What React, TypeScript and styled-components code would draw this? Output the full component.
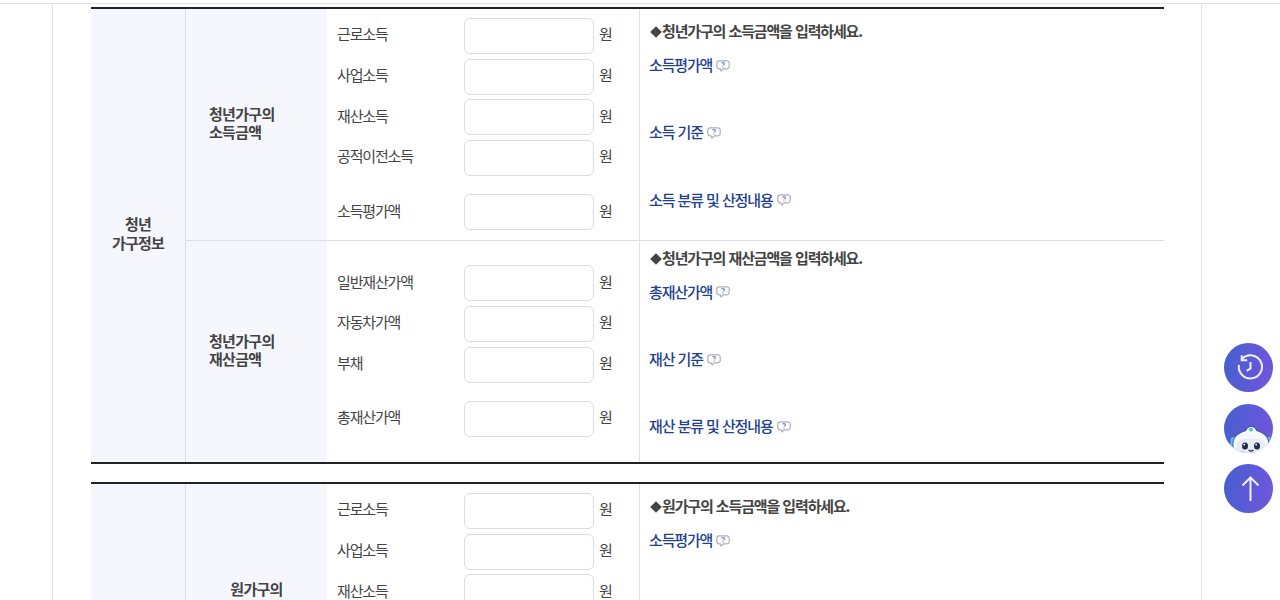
import styled, { createGlobalStyle } from 'styled-components'

const GlobalStyle = createGlobalStyle`
  * {
    box-sizing: border-box;
  }

  body {
    margin: 0;
    background: #fff;
    color: #444;
    font-family: 'Noto Sans CJK KR', 'Noto Sans', sans-serif;
    font-size: 15px;
    letter-spacing: -1.15px;
    word-spacing: 1px;
  }
`

const Page = styled.div`
  height: 600px;
  padding-top: 3px;
  overflow: hidden;
`

const Frame = styled.main`
  border-top: 1px solid #e2e2e2;
  height: 100%;
`

const Content = styled.div`
  width: 1150px;
  height: 620px;
  margin-left: 52px;
  padding: 3px 37px 0 38px;
  border: solid #e2e2e2;
  border-width: 0 1px;
`

const Table = styled.section<{ $height: number }>`
  display: grid;
  grid-template-columns: 94px 1fr;
  grid-template-rows: 100%;
  width: 1073px;
  height: ${({ $height }) => $height}px;
  margin-bottom: 18px;
  border: solid #222226;
  border-width: 2px 0;
`

const GroupHead = styled.div`
  display: flex;
  align-items: center;
  justify-content: center;
  padding-bottom: 4px;
  background: #f6f7fd;
  font-weight: 700;
  letter-spacing: -0.8px;
  line-height: 18.5px;
  text-align: center;
`

const Groups = styled.div`
  display: flex;
  flex-direction: column;
  border-left: 1px solid #dcdde3;
`

const Group = styled.div<{ $height: number }>`
  display: grid;
  grid-template-columns: 141px 312px 1fr;
  grid-template-rows: 100%;
  flex: none;
  height: ${({ $height }) => $height}px;

  & + & {
    border-top: 1px solid #dedee2;
  }
`

const GroupTitle = styled.div<{ $center?: boolean }>`
  display: flex;
  align-items: center;
  justify-content: ${({ $center }) => ($center ? 'center' : 'flex-start')};
  padding: 0 0 3px ${({ $center }) => ($center ? 0 : 23)}px;
  background: #f6f7fd;
  font-weight: 700;
  letter-spacing: -0.7px;
  line-height: 18.5px;
`

const Fields = styled.div<{ $top: number }>`
  padding: ${({ $top }) => $top}px 0 0 10px;
`

const Field = styled.label`
  display: flex;
  align-items: center;
  height: 36px;
  margin-bottom: 4.7px;

  &.total {
    margin-top: 18.4px;
  }
`

const FieldName = styled.span`
  width: 127px;
  line-height: 20px;
  padding-bottom: 3.5px;
`

const Input = styled.input`
  width: 130px;
  height: 36px;
  margin-right: 5px;
  padding: 0 10px;
  border: 1px solid #dcdcdc;
  border-radius: 6px;
  background: #fff;
  font: inherit;
`

const Unit = styled.span`
  padding-bottom: 3.5px;
  line-height: 20px;
`

const Guide = styled.div<{ $top: number }>`
  padding: ${({ $top }) => $top}px 0 0 9px;
  border-left: 1px solid #e2e2e6;
`

const GuideTitle = styled.p`
  margin: -1px 0 1px;
  padding-left: 1px;
  font-weight: 700;
  line-height: 33.6px;
`

const Diamond = styled.svg`
  width: 12px;
  height: 12px;
  vertical-align: -1px;
  fill: #444;
`

const GuideLink = styled.a`
  display: flex;
  align-items: center;
  gap: 4px;
  height: 33.6px;
  margin-bottom: 33.6px;
  color: #1f3f93;
  font-weight: 500;
  line-height: 33.6px;
  cursor: pointer;

  &:last-child {
    margin-bottom: 0;
  }

  svg {
    display: block;
    flex: none;
    margin-top: 1px;
  }
`

const QuickMenu = styled.nav`
  position: fixed;
  top: 343px;
  right: 7px;
  display: flex;
  flex-direction: column;
  gap: 11.5px;
`

const QuickButton = styled.button`
  display: block;
  width: 49px;
  height: 49px;
  padding: 0;
  overflow: hidden;
  border: 0;
  border-radius: 50%;
  background: linear-gradient(100deg, #455fcf, #7256dd);
  cursor: pointer;

  svg {
    display: block;
  }
`

interface GroupData {
  title: string[]
  center?: boolean
  height: number
  top: number
  guideTop: number
  fields: string[]
  total: string
  guide: string
  links: string[]
}

interface TableData {
  head: string[]
  height: number
  groups: GroupData[]
}

const tables: TableData[] = [
  {
    head: ['청년', '가구정보'],
    height: 457,
    groups: [
      {
        title: ['청년가구의', '소득금액'],
        height: 231,
        top: 9,
        guideTop: 5.7,
        fields: ['근로소득', '사업소득', '재산소득', '공적이전소득'],
        total: '소득평가액',
        guide: '청년가구의 소득금액을 입력하세요.',
        links: ['소득평가액', '소득 기준', '소득 분류 및 산정내용'],
      },
      {
        title: ['청년가구의', '재산금액'],
        height: 222,
        top: 24.4,
        guideTop: 0.5,
        fields: ['일반재산가액', '자동차가액', '부채'],
        total: '총재산가액',
        guide: '청년가구의 재산금액을 입력하세요.',
        links: ['총재산가액', '재산 기준', '재산 분류 및 산정내용'],
      },
    ],
  },
  {
    head: ['원가구정보'],
    height: 457,
    groups: [
      {
        title: ['원가구의', '소득금액'],
        center: true,
        height: 231,
        top: 9,
        guideTop: 5.7,
        fields: ['근로소득', '사업소득', '재산소득', '공적이전소득'],
        total: '소득평가액',
        guide: '원가구의 소득금액을 입력하세요.',
        links: ['소득평가액', '소득 기준', '소득 분류 및 산정내용'],
      },
    ],
  },
]

const Lines = ({ items }: { items: string[] }) => (
  <div>
    {items.map((line) => (
      <div key={line}>{line}</div>
    ))}
  </div>
)

const HelpIcon = () => (
  <svg width="14" height="12" viewBox="0 0 14 12" fill="none">
    <path
      d="M3 .8h8a2.2 2.2 0 0 1 2.2 2.2v3.6A2.2 2.2 0 0 1 11 8.8H7.2L5 11 4.2 8.8H3A2.2 2.2 0 0 1 .8 6.6V3A2.2 2.2 0 0 1 3 .8Z"
      stroke="#aeb0b6"
      strokeWidth="1.2"
      strokeLinejoin="round"
    />
    <path
      d="M5.600 3.400c.2-1.100 2.900-1.100 2.900.3 0 .9-1.500.9-1.500 1.900M7 6.600v.9"
      stroke="#6c88d2"
      strokeWidth="1.1"
    />
  </svg>
)

const HistoryIcon = () => (
  <svg width="49" height="49" viewBox="0 0 49 49" fill="none" stroke="#f1efff">
    <path d="M18.300 15.600A11.600 11.600 0 1 1 15 21.900" strokeWidth="2" />
    <path d="M17.700 12.300v5h5.500" strokeWidth="2" />
    <path d="M26.500 19V25.500l-3.800 2.400" strokeWidth="2" />
  </svg>
)

const BotIcon = () => (
  <svg width="49" height="49" viewBox="0 0 49 49">
    <rect x="6.500" y="33" width="6" height="14" rx="3" fill="#64bdf2" />
    <rect x="41.500" y="33" width="6" height="14" rx="3" fill="#64bdf2" />
    <path
      d="M9 49V39.500c.5-7.500 6-10.700 13-13 2-5.500 8.500-5.500 10.500 0 7 2.300 11.700 5.500 12.200 13V49Z"
      fill="#f5f8ff"
      stroke="#34447f"
      strokeWidth=".8"
    />
    <rect x="12.500" y="35" width="29" height="16" rx="7" fill="#e9ebf4" />
    <circle cx="27" cy="25.500" r="2" fill="#55bceb" />
    <ellipse cx="21" cy="42" rx="3" ry="3.600" fill="#202b4b" />
    <ellipse cx="33" cy="42" rx="3" ry="3.600" fill="#202b4b" />
    <circle cx="20.200" cy="40.700" r=".9" fill="#fff" />
    <circle cx="32.200" cy="40.700" r=".9" fill="#fff" />
    <path d="M24.700 46q2.300 2.300 4.600 0" fill="none" stroke="#26304b" strokeWidth="1.300" />
    <path d="M16.500 47.300h3M34 47.300h3" stroke="#f0b4c8" />
  </svg>
)

const ArrowUpIcon = () => (
  <svg width="49" height="49" viewBox="0 0 49 49" fill="none" stroke="#f1efff">
    <path d="M26.500 37V13.500M18.500 21.500l8-8 8 8" strokeWidth="2" />
  </svg>
)

const FieldRow = ({ name, total }: { name: string; total?: boolean }) => (
  <Field className={total ? 'total' : undefined}>
    <FieldName>{name}</FieldName>
    <Input type="text" />
    <Unit>원</Unit>
  </Field>
)

const App = () => {
  return (
    <Page>
      <GlobalStyle />
      <Frame>
        <Content>
          {tables.map((table) => (
            <Table key={table.head[0]} $height={table.height}>
              <GroupHead>
                <Lines items={table.head} />
              </GroupHead>
              <Groups>
                {table.groups.map((group) => (
                  <Group key={group.guide} $height={group.height}>
                    <GroupTitle $center={group.center}>
                      <Lines items={group.title} />
                    </GroupTitle>
                    <Fields $top={group.top}>
                      {group.fields.map((name) => (
                        <FieldRow key={name} name={name} />
                      ))}
                      <FieldRow name={group.total} total />
                    </Fields>
                    <Guide $top={group.guideTop}>
                      <GuideTitle>
                        <Diamond viewBox="0 0 12 12">
                          <path d="M6 .2 11.800 6 6 11.800.2 6Z" />
                        </Diamond>
                        {group.guide}
                      </GuideTitle>
                      {group.links.map((link) => (
                        <GuideLink key={link}>
                          {link}
                          <HelpIcon />
                        </GuideLink>
                      ))}
                    </Guide>
                  </Group>
                ))}
              </Groups>
            </Table>
          ))}
        </Content>
      </Frame>
      <QuickMenu>
        <QuickButton aria-label="최근 이용">
          <HistoryIcon />
        </QuickButton>
        <QuickButton aria-label="챗봇">
          <BotIcon />
        </QuickButton>
        <QuickButton aria-label="맨 위로">
          <ArrowUpIcon />
        </QuickButton>
      </QuickMenu>
    </Page>
  )
}

export default App
